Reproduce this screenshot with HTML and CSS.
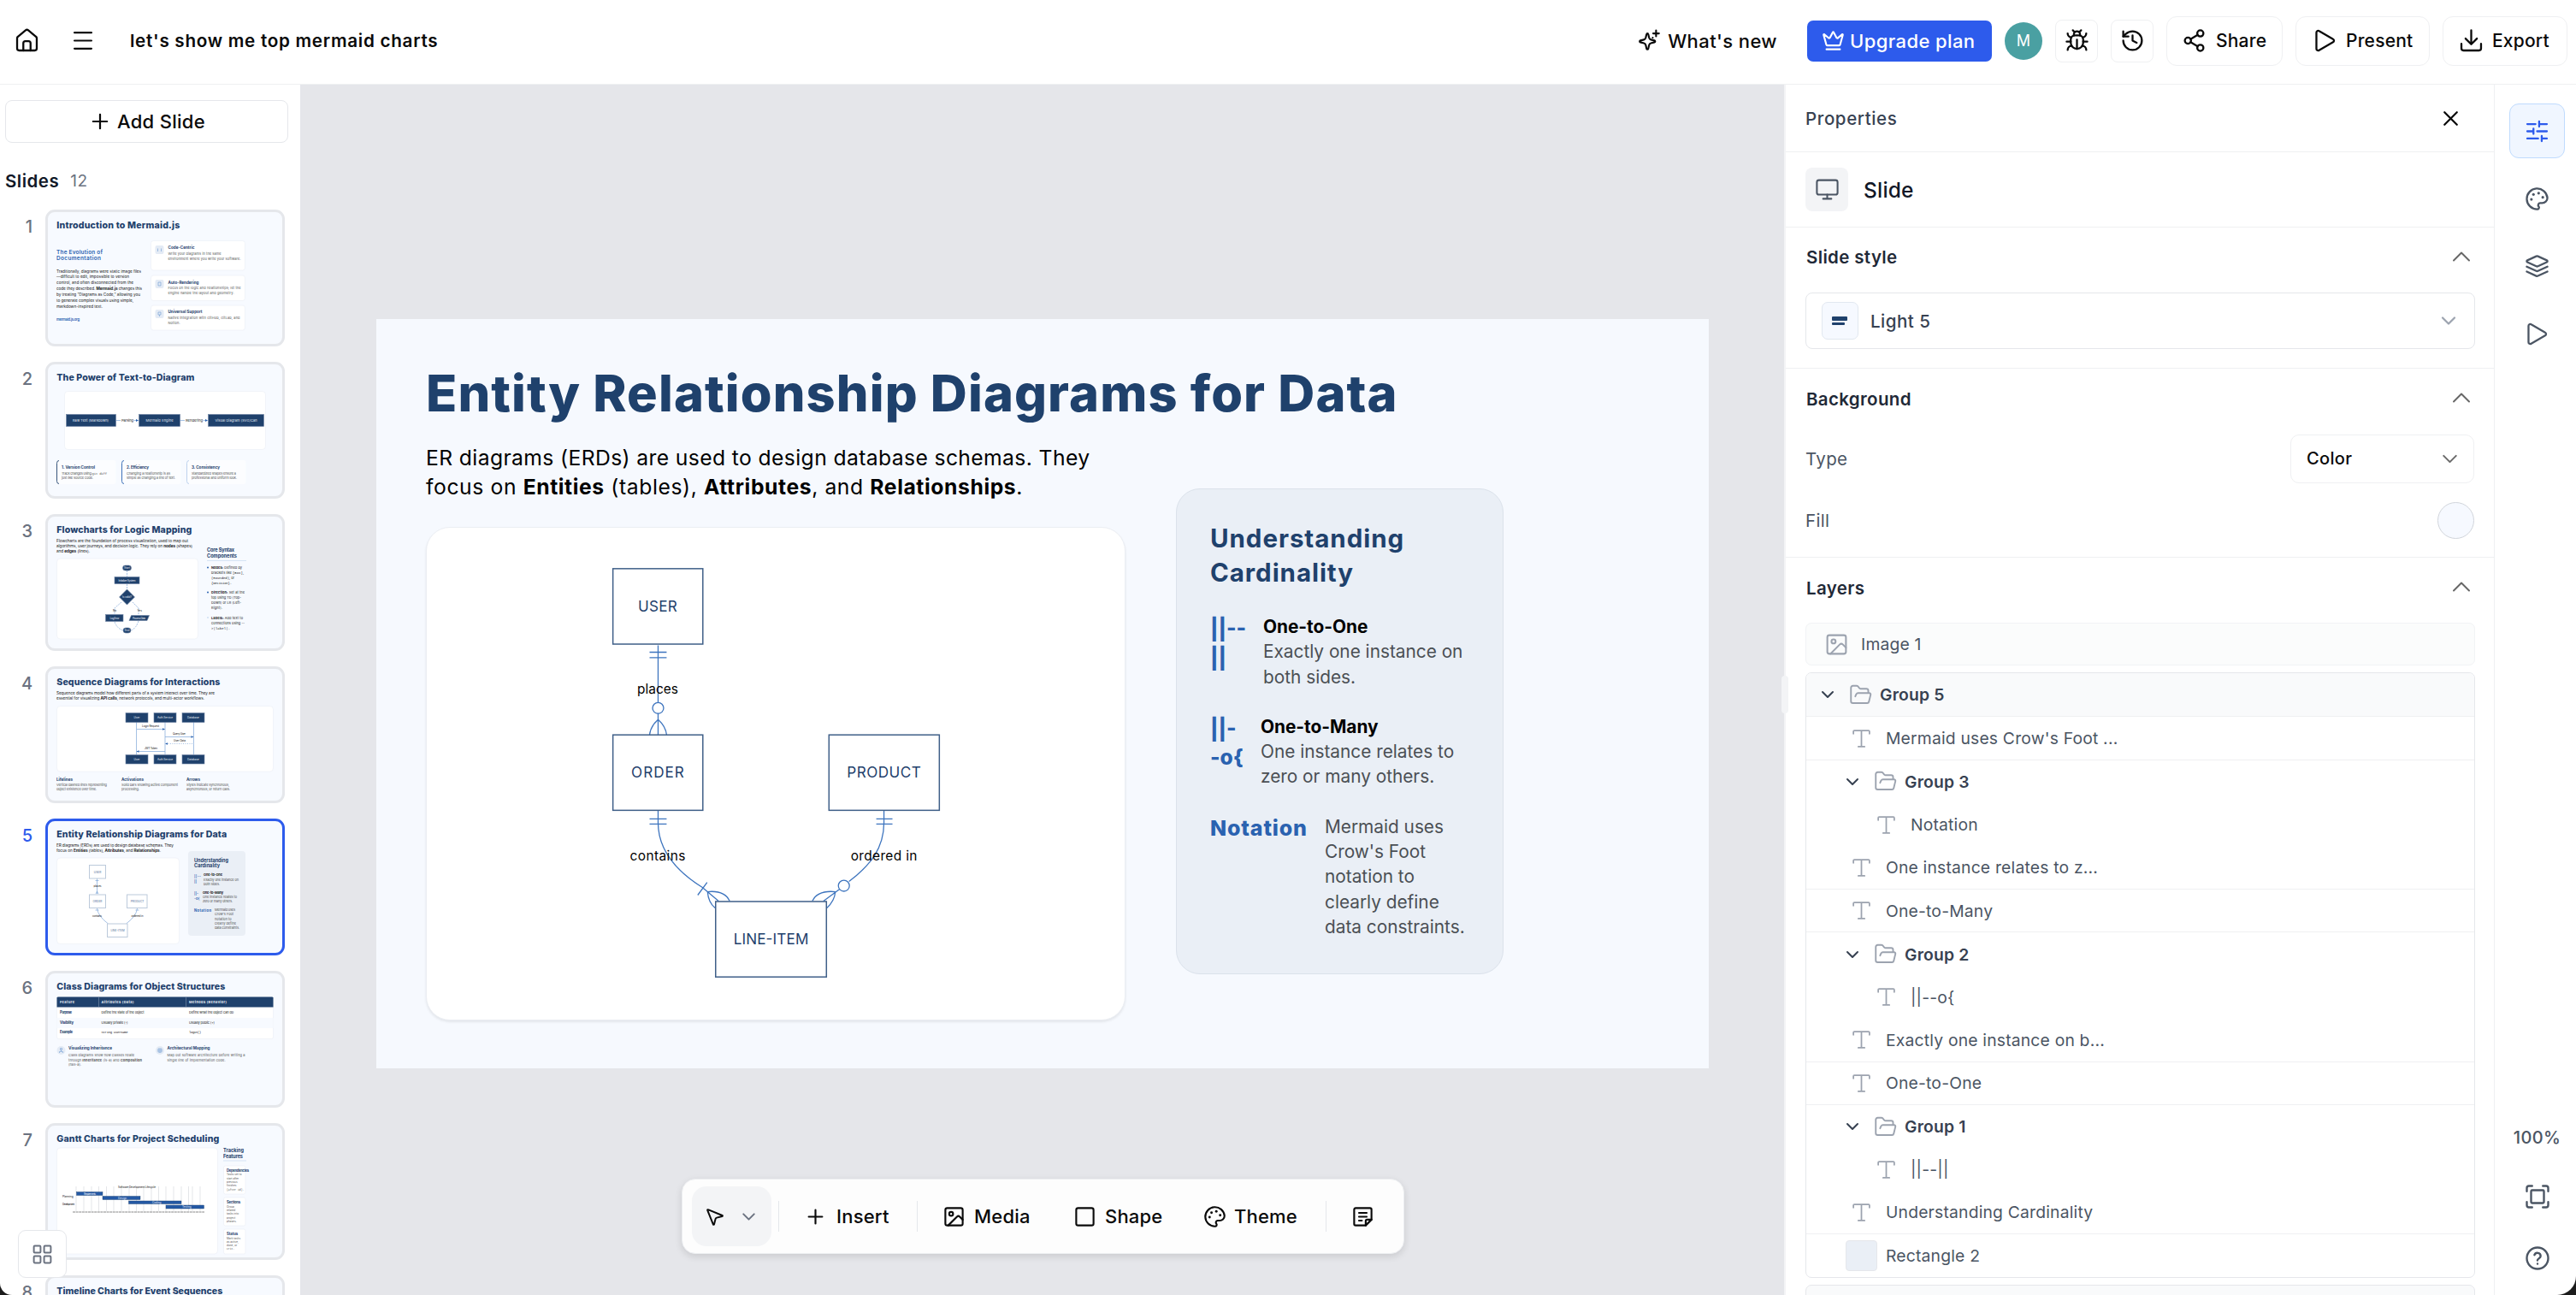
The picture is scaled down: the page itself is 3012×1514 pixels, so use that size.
FILE: index.html
```html
<!DOCTYPE html>
<html lang="en">
<head>
  <meta charset="UTF-8" />
  <meta name="viewport" content="width=device-width, initial-scale=1.0"/>
  <title>let's show me top mermaid charts</title>
  <link rel="stylesheet" href="styles.css">
</head>
<body>

  <!-- icon set -->
  <svg class="icon-defs" width="0" height="0">
    <symbol id="i-home" viewBox="0 0 24 24"><path d="M8.5 21.5v-7a2 2 0 0 1 2-2h3a2 2 0 0 1 2 2v7"/><path d="M2.5 9.7a2 2 0 0 1 .8-1.6L10.7 2a2 2 0 0 1 2.6 0l7.4 6.1a2 2 0 0 1 .8 1.6v9.8a2 2 0 0 1-2 2h-15a2 2 0 0 1-2-2z"/></symbol>
    <symbol id="i-menu" viewBox="0 0 24 24"><path d="M3.5 4h17M3.5 12h17M3.5 20h17"/></symbol>
    <symbol id="i-plus" viewBox="0 0 24 24"><path d="M5 12h14M12 5v14"/></symbol>
    <symbol id="i-x" viewBox="0 0 24 24"><path d="M18 6 6 18M6 6l12 12"/></symbol>
    <symbol id="i-down" viewBox="0 0 24 24"><path d="m6 9 6 6 6-6"/></symbol>
    <symbol id="i-up" viewBox="0 0 24 24"><path d="m6 15 6-6 6 6"/></symbol>
    <symbol id="i-sparkles" viewBox="0 0 24 24"><path d="M10 4.500c.5 0 .8.3.9.8l.9 3.900a2.500 2.500 0 0 0 1.800 1.800l3.700.9c1 .3 1 1.500 0 1.800l-3.700.9a2.500 2.500 0 0 0-1.800 1.800l-.9 3.900c-.3 1-1.500 1-1.800 0l-.9-3.900a2.500 2.500 0 0 0-1.800-1.800l-3.700-.9c-1-.3-1-1.500 0-1.800l3.700-.9a2.500 2.500 0 0 0 1.800-1.800l.9-3.900c.1-.5.4-.8.9-.8z"/><path d="M19 1.500v6M22 4.500h-6M15.500 9v.01"/></symbol>
    <symbol id="i-crown" viewBox="0 0 24 24"><path d="M11.562 3.266a.5.5 0 0 1 .876 0L15.390 8.870a1 1 0 0 0 1.516.294L21.183 5.500a.5.5 0 0 1 .798.519l-2.834 10.246a1 1 0 0 1-.956.734H5.810a1 1 0 0 1-.957-.734L2.020 6.020a.5.5 0 0 1 .798-.519l4.276 3.664a1 1 0 0 0 1.516-.294z"/><path d="M5 21h14"/></symbol>
    <symbol id="i-bug" viewBox="0 0 24 24"><path d="m8 2 1.880 1.880M14.120 3.880 16 2M9 7.130v-1a3.003 3.003 0 1 1 6 0v1"/><path d="M12 20c-3.300 0-6-2.700-6-6v-3a4 4 0 0 1 4-4h4a4 4 0 0 1 4 4v3c0 3.300-2.700 6-6 6"/><path d="M12 20v-9M6.530 9C4.600 8.800 3 7.100 3 5M6 13H2M3 21c0-2.100 1.700-3.900 3.800-4M20.970 5c0 2.100-1.600 3.800-3.500 4M22 13h-4M17.200 17c2.100.1 3.800 1.900 3.800 4"/></symbol>
    <symbol id="i-history" viewBox="0 0 24 24"><path d="M3 12a9 9 0 1 0 9-9 9.750 9.750 0 0 0-6.740 2.740L3 8"/><path d="M3 3v5h5M12 7v5l4 2"/></symbol>
    <symbol id="i-share" viewBox="0 0 24 24"><circle cx="18" cy="5" r="3"/><circle cx="6" cy="12" r="3"/><circle cx="18" cy="19" r="3"/><path d="m8.590 13.510 6.830 3.980M15.410 6.510l-6.820 3.980"/></symbol>
    <symbol id="i-play" viewBox="0 0 24 24"><path d="M3.700 4.200a1.700 1.700 0 0 1 2.600-1.500l13.500 7.800a1.700 1.700 0 0 1 0 3l-13.500 7.800a1.700 1.700 0 0 1-2.600-1.500z"/></symbol>
    <symbol id="i-download" viewBox="0 0 24 24"><path d="M12 2v13.500M6.500 10l5.500 5.500 5.500-5.500M2.500 15v4.500a2 2 0 0 0 2 2h15a2 2 0 0 0 2-2V15"/></symbol>
    <symbol id="i-sliders" viewBox="0 0 24 24"><path d="M2.500 5h8M14 5h7.500M14 2.500v5M2.500 12h5M8.500 9.500v5M12 12h9.500M2.500 19h10.500M16.500 19h5M16.500 16.500v5"/></symbol>
    <symbol id="i-palette" viewBox="0 0 24 24"><path d="M12 22a10 10 0 1 1 10-11c0 3-2.500 5-5 5h-2a2 2 0 0 0-1.400 3.400A1.650 1.650 0 0 1 12 22z"/><circle class="dot" cx="13.500" cy="6.500" r="1.300"/><circle class="dot" cx="17.500" cy="10.500" r="1.300"/><circle class="dot" cx="6.500" cy="12.500" r="1.300"/><circle class="dot" cx="8.500" cy="7.700" r="1.300"/></symbol>
    <symbol id="i-layers" viewBox="0 0 24 24"><path d="M12.830 2.180a2 2 0 0 0-1.660 0L2.600 6.080a1 1 0 0 0 0 1.830l8.580 3.910a2 2 0 0 0 1.660 0l8.580-3.900a1 1 0 0 0 0-1.830z"/><path d="m2 12.200 9.170 4.170a2 2 0 0 0 1.660 0L22 12.200M2 17l9.170 4.170a2 2 0 0 0 1.660 0L22 17"/></symbol>
    <symbol id="i-monitor" viewBox="0 0 24 24"><rect x="2" y="3" width="20" height="14" rx="2"/><path d="M8 21h8M12 17v4"/></symbol>
    <symbol id="i-image" viewBox="0 0 24 24"><rect x="3" y="3" width="18" height="18" rx="2"/><circle cx="9" cy="9" r="2"/><path d="m21 15-3.086-3.086a2 2 0 0 0-2.828 0L6 21"/></symbol>
    <symbol id="i-square" viewBox="0 0 24 24"><rect x="3" y="3" width="18" height="18" rx="2"/></symbol>
    <symbol id="i-note" viewBox="0 0 24 24"><path d="M21 15V4.500A1.500 1.500 0 0 0 19.500 3h-15A1.500 1.500 0 0 0 3 4.500v15A1.500 1.500 0 0 0 4.500 21H15z"/><path d="M21 15h-4.500a1.500 1.500 0 0 0-1.500 1.500V21M8 8h8M8 12h8M8 16h3"/></symbol>
    <symbol id="i-pointer" viewBox="0 0 24 24"><path d="M4.037 4.688a.495.495 0 0 1 .651-.651l16 6.500a.5.5 0 0 1-.063.947l-6.124 1.580a2 2 0 0 0-1.438 1.435l-1.579 6.126a.5.5 0 0 1-.947.063z"/></symbol>
    <symbol id="i-folder" viewBox="0 0 24 24"><path d="M6.500 13.500 7.600 11a2 2 0 0 1 1.800-1H21a1.500 1.500 0 0 1 1.400 1.900l-1.700 7A2 2 0 0 1 18.800 20.500H4a2 2 0 0 1-2-2v-14a2 2 0 0 1 2-2h4a2 2 0 0 1 1.600.9l.9 1.200a2 2 0 0 0 1.600.9H18a2 2 0 0 1 2 2V10"/></symbol>
    <symbol id="i-text" viewBox="0 0 24 24"><path d="M12 3v18M3 6.500V4a1 1 0 0 1 1-1h16a1 1 0 0 1 1 1v2.500M8.500 21h7"/></symbol>
    <symbol id="i-fit" viewBox="0 0 24 24"><path d="M2 7V4a2 2 0 0 1 2-2h3M17 2h3a2 2 0 0 1 2 2v3M22 17v3a2 2 0 0 1-2 2h-3M7 22H4a2 2 0 0 1-2-2v-3"/><rect x="6" y="6" width="12" height="12" rx="1"/></symbol>
    <symbol id="i-help" viewBox="0 0 24 24"><circle cx="12" cy="12" r="10"/><path d="M9.090 9a3 3 0 0 1 5.830 1c0 2-3 2.500-3 4M12 17.200v.01"/></symbol>
    <symbol id="i-grid" viewBox="0 0 24 24"><rect x="2.500" y="2.500" width="7.500" height="7.500" rx="1"/><rect x="14" y="2.500" width="7.500" height="7.500" rx="1"/><rect x="2.500" y="14" width="7.500" height="7.500" rx="1"/><rect x="14" y="14" width="7.500" height="7.500" rx="1"/></symbol>
  </svg>

  <div class="app">
    <header class="topbar">
      <svg class="icon home"><use href="#i-home"/></svg>
      <svg class="icon menu"><use href="#i-menu"/></svg>
      <h1 class="doc-title">let's show me top mermaid charts</h1>
      <div class="actions">
        <button class="whats-new"><svg class="icon"><use href="#i-sparkles"/></svg><span>What's new</span></button>
        <button class="upgrade"><svg class="icon"><use href="#i-crown"/></svg><span>Upgrade plan</span></button>
        <div class="avatar">M</div>
        <button class="icon-btn"><svg class="icon"><use href="#i-bug"/></svg></button>
        <button class="icon-btn"><svg class="icon"><use href="#i-history"/></svg></button>
        <button class="btn share"><svg class="icon"><use href="#i-share"/></svg><span>Share</span></button>
        <button class="btn present"><svg class="icon"><use href="#i-play"/></svg><span>Present</span></button>
        <button class="btn export"><svg class="icon"><use href="#i-download"/></svg><span>Export</span></button>
      </div>
    </header>

    <div class="workspace">
      <aside class="sidebar">
        <button class="add-slide"><svg class="icon"><use href="#i-plus"/></svg>Add Slide</button>
        <div class="slides-head"><b>Slides</b><span>12</span></div>
        <div class="thumbs">

          <div class="thumb-row">
            <span class="num">1</span>
            <svg class="thumb" viewBox="0 0 274 154">
              <text class="t" x="10.300" y="19" textLength="144">Introduction to Mermaid.js</text>
              <g class="sub"><text x="10" y="49" textLength="54">The Evolution of</text><text x="10" y="56" textLength="52">Documentation</text></g>
              <g class="body">
                <text x="10" y="70.500" textLength="99">Traditionally, diagrams were static image files</text>
                <text x="10" y="76.500" textLength="85">—difficult to edit, impossible to version</text>
                <text x="10" y="83.500" textLength="90">control, and often disconnected from the</text>
                <text x="10" y="90.500" textLength="100">code they described. <tspan class="b">Mermaid.js</tspan> changes this</text>
                <text x="10" y="97.500" textLength="98">by treating "Diagrams as Code," allowing you</text>
                <text x="10" y="104.500" textLength="90">to generate complex visuals using simple,</text>
                <text x="10" y="111.500" textLength="54">markdown-inspired text.</text>
              </g>
              <text class="link" x="10" y="126.500" textLength="27">mermaid.js.org</text>
              <rect class="card" x="120.500" y="33.500" width="110" height="34.500" rx="3"/>
              <rect class="card" x="120.500" y="74" width="110" height="29.500" rx="3"/>
              <rect class="card" x="120.500" y="109" width="110" height="29" rx="3"/>
              <rect class="chip" x="125.500" y="39" width="10" height="10" rx="2"/>
              <rect class="chip" x="125.500" y="79" width="10" height="10" rx="2"/>
              <rect class="chip" x="125.500" y="114" width="10" height="10" rx="2"/>
              <path class="ln" d="M128.500 42.500v3.500M132.500 42.500v3.500M129 82h3v4h-3zM129 117h3v3h-3zM130.500 120v2"/>
              <g class="head"><text x="140.500" y="43.200" textLength="31">Code-Centric</text><text x="140.500" y="84" textLength="36">Auto-Rendering</text><text x="140.500" y="118.200" textLength="40">Universal Support</text></g>
              <g class="small">
                <text x="140.500" y="50" textLength="62">Write your diagrams in the same</text><text x="140.500" y="56" textLength="85">environment where you write your software.</text>
                <text x="140.500" y="90" textLength="85">Focus on the logic and relationships; let the</text><text x="140.500" y="96" textLength="77">engine handle the layout and geometry.</text>
                <text x="140.500" y="125" textLength="84">Native integration with GitHub, GitLab, and</text><text x="140.500" y="131" textLength="14">Notion.</text>
              </g>
            </svg>
          </div>

          <div class="thumb-row">
            <span class="num">2</span>
            <svg class="thumb" viewBox="0 0 274 154">
              <text class="t" x="10.300" y="19" textLength="161">The Power of Text-to-Diagram</text>
              <rect class="card" x="19.500" y="31.500" width="235" height="68" rx="4"/>
              <path class="ln" d="M80 65.500h5M100.500 65.500h5M155 65.500h5M181.500 65.500h5"/>
              <path class="tip" d="M103 64l3 1.500-3 1.500zM184 64l3 1.500-3 1.500z"/>
              <rect class="node" x="21.500" y="58.500" width="58" height="14"/>
              <rect class="node" x="106.500" y="58.500" width="48" height="14"/>
              <rect class="node" x="187.500" y="58.500" width="65" height="14"/>
              <g class="inv"><text x="29" y="67" textLength="42">Raw Text (Markdown)</text><text x="114.500" y="67" textLength="32">Mermaid Engine</text><text x="195.500" y="67" textLength="49">Visual Diagram (SVG/Can</text></g>
              <g class="lbl"><text x="86" y="67" textLength="14">Parsing</text><text x="161" y="67" textLength="20">Rendering</text></g>
              <rect class="soft" x="10.500" y="112" width="69" height="28" rx="3"/><rect class="soft" x="86.500" y="112" width="69" height="28" rx="3"/><rect class="soft" x="162.500" y="112" width="69" height="28" rx="3"/>
              <path class="acc a1" d="M13 112.500q-2.500 0-2.500 3v21q0 3 2.500 3"/><path class="acc a2" d="M89 112.500q-2.500 0-2.500 3v21q0 3 2.500 3"/><path class="acc a3" d="M165 112.500q-2.500 0-2.500 3v21q0 3 2.500 3"/>
              <g class="head"><text x="16" y="121.800" textLength="39">1. Version Control</text><text x="92" y="121.800" textLength="26">2. Efficiency</text><text x="168" y="121.800" textLength="33">3. Consistency</text></g>
              <g class="small">
                <text x="16" y="129" textLength="53">Track changes using <tspan class="mono">git diff</tspan></text><text x="16" y="133.800" textLength="37">just like source code.</text>
                <text x="92" y="129" textLength="51">Changing a relationship is as</text><text x="92" y="133.800" textLength="57">simple as changing a line of text.</text>
                <text x="168" y="129" textLength="52">Standardized shapes ensure a</text><text x="168" y="133.800" textLength="53">professional and uniform look.</text>
              </g>
            </svg>
          </div>

          <div class="thumb-row">
            <span class="num">3</span>
            <svg class="thumb" viewBox="0 0 274 154">
              <text class="t" x="10.300" y="19" textLength="158">Flowcharts for Logic Mapping</text>
              <g class="body"><text x="10" y="30" textLength="154">Flowcharts are the foundation of process visualization, used to map out</text><text x="10" y="36" textLength="159">algorithms, user journeys, and decision logic. They rely on <tspan class="b">nodes</tspan> (shapes)</text><text x="10" y="42" textLength="39">and <tspan class="b">edges</tspan> (lines).</text></g>
              <rect class="card" x="10.500" y="49" width="165" height="94" rx="4"/>
              <path class="ln dash" d="M92.500 63v7M92.500 79v6M86 100l-8 7v7M99 100l7 7v8M78 123q3 8 10 10M106 122q-3 9-9 11"/>
              <rect class="node" x="87.500" y="57" width="10" height="6" rx="3"/>
              <rect class="node" x="78" y="70.500" width="29" height="8"/>
              <path class="node" d="M92.500 85l9 9-9 9-9-9z"/>
              <rect class="node" x="67.500" y="114.500" width="20.500" height="8"/>
              <path class="node" d="M97.500 115.500h21l-2.500 6h-21z"/>
              <rect class="node" x="88" y="130" width="9" height="6" rx="3"/>
              <g class="inv tiny"><text x="92.500" y="61" text-anchor="middle">Start</text><text x="92.500" y="75.500" text-anchor="middle" textLength="20">Initialize System</text><text x="92.500" y="95" text-anchor="middle" textLength="11">Is valid?</text><text x="78" y="119.500" text-anchor="middle" textLength="11">Log Error</text><text x="106.500" y="119.500" text-anchor="middle" textLength="15">Process Data</text><text x="92.500" y="134" text-anchor="middle">End</text></g>
              <g class="lbl tiny"><text x="76" y="110.500">No</text><text x="104.500" y="110.500">Yes</text></g>
              <g class="head side"><text x="186" y="41" textLength="32">Core Syntax</text><text x="186" y="48" textLength="35">Components</text></g>
              <path class="rule" d="M186 51.500h46"/>
              <circle class="tip" cx="187" cy="59.500" r="1"/><circle class="tip" cx="187" cy="88.500" r="1"/><circle class="tip a3" cx="187" cy="118" r=".8"/>
              <g class="small dark"><text x="191" y="61" textLength="36"><tspan class="b">Nodes:</tspan> Defined by</text><text x="191" y="67" textLength="38">brackets like <tspan class="mono">[Box]</tspan>,</text><text x="191" y="73" textLength="27"><tspan class="mono">(Rounded)</tspan>, or</text><text x="191" y="79" textLength="24" class="mono">{Decision}.</text>
              <text x="191" y="90" textLength="39"><tspan class="b">Direction:</tspan> Set at the</text><text x="191" y="96" textLength="35">top using TD (Top-</text><text x="191" y="102" textLength="35">Down) or LR (Left-</text><text x="191" y="108" textLength="13">Right).</text>
              <text x="191" y="120" textLength="37"><tspan class="b">Labels:</tspan> Add text to</text><text x="191" y="126" textLength="39">connections using --</text><text x="191" y="132" textLength="22" class="mono">&gt;|label|.</text></g>
            </svg>
          </div>

          <div class="thumb-row">
            <span class="num">4</span>
            <svg class="thumb" viewBox="0 0 274 154">
              <text class="t" x="10.300" y="19" textLength="191">Sequence Diagrams for Interactions</text>
              <g class="body"><text x="10" y="30" textLength="185">Sequence diagrams model how different parts of a system interact over time. They are</text><text x="10" y="36" textLength="173">essential for visualizing <tspan class="b">API calls</tspan>, network protocols, and multi-actor workflows.</text></g>
              <rect class="card" x="10.500" y="43.500" width="253" height="76.500" rx="4"/>
              <path class="ln" d="M103.500 62v38M137 62v38M170.500 62v38M104 70.500h33M137 79.500h33M104 96.500h33"/>
              <path class="ln" stroke-dasharray="1 1.500" d="M138 87.500h32"/>
              <path class="tip" d="M134 69.300l3 1.200-3 1.200zM167.500 78.300l3 1.200-3 1.200zM140 86.300l-3 1.200 3 1.200zM106.500 95.300l-3 1.200 3 1.200z"/>
              <g class="node"><rect x="91" y="51.500" width="26" height="11"/><rect x="124" y="51.500" width="26" height="11"/><rect x="157" y="51.500" width="26" height="11"/><rect x="91" y="100.500" width="26" height="10.500"/><rect x="124" y="100.500" width="26" height="10.500"/><rect x="157" y="100.500" width="26" height="10.500"/></g>
              <g class="inv tiny"><text x="104" y="58.200" text-anchor="middle">User</text><text x="137" y="58.200" text-anchor="middle" textLength="18">Auth Service</text><text x="170" y="58.200" text-anchor="middle">Database</text><text x="104" y="107" text-anchor="middle">User</text><text x="137" y="107" text-anchor="middle" textLength="18">Auth Service</text><text x="170" y="107" text-anchor="middle">Database</text></g>
              <g class="lbl tiny"><text x="110" y="68" textLength="20">Login Request</text><text x="146" y="77" textLength="15">Query User</text><text x="147" y="85" textLength="14">User Data</text><text x="113" y="94" textLength="15">JWT Token</text></g>
              <g class="head"><text x="10" y="130.800" textLength="19">Lifelines</text><text x="86" y="130.800" textLength="26">Activations</text><text x="162" y="130.800" textLength="16">Arrows</text></g>
              <g class="small"><text x="10" y="137" textLength="59">Vertical dashed lines representing</text><text x="10" y="142" textLength="47">object existence over time.</text><text x="86" y="137" textLength="66">Solid bars showing active component</text><text x="86" y="142" textLength="21">processing.</text><text x="162" y="137" textLength="50">Styles indicate synchronous,</text><text x="162" y="142" textLength="51">asynchronous, or return calls.</text></g>
            </svg>
          </div>

          <div class="thumb-row active">
            <span class="num">5</span>
            <svg class="thumb" viewBox="0 0 274 154">
              <text class="t" x="10.300" y="19" textLength="199">Entity Relationship Diagrams for Data</text>
              <g class="body"><text x="10" y="30" textLength="137">ER diagrams (ERDs) are used to design database schemas. They</text><text x="10" y="36" textLength="122">focus on <tspan class="b">Entities</tspan> (tables), <tspan class="b">Attributes</tspan>, and <tspan class="b">Relationships</tspan>.</text></g>
              <rect class="card" x="10.500" y="43" width="143" height="100.500" rx="4"/>
              <rect class="side-card" x="164" y="35" width="67" height="99" rx="4"/>
              <path class="ln" d="M57.500 67v18M55.500 69.500h4M55.500 104h4M102.500 104h4M57.500 102q1 9 13 18M104.500 102q-1 9-13 18M56 85l1.500-3 1.500 3"/>
              <g class="ent"><rect x="48.500" y="51.500" width="19" height="15.500"/><rect x="48.500" y="86" width="19" height="15.500"/><rect x="92.500" y="86" width="23.500" height="15.500"/><rect x="69.500" y="120" width="23.500" height="15.500"/></g>
              <g class="enttxt"><text x="58" y="60.500">USER</text><text x="58" y="94.800">ORDER</text><text x="104.500" y="94.800">PRODUCT</text><text x="81.500" y="129.200">LINE-ITEM</text></g>
              <g class="lbl tiny"><text x="53.500" y="77" textLength="9">places</text><text x="52" y="111.500" textLength="11">contains</text><text x="97.500" y="111.500" textLength="14">ordered in</text></g>
              <g class="head side"><text x="171" y="47.500" textLength="40">Understanding</text><text x="171" y="54.300" textLength="30">Cardinality</text></g>
              <g class="link"><text x="171" y="65.500" textLength="8">||--</text><text x="171" y="71.500">||</text><text x="171" y="86">||-</text><text x="171" y="92">-o{</text><text x="171" y="106" class="b" textLength="20">Notation</text></g>
              <g class="small dark b"><text x="182" y="64" textLength="22">One-to-One</text><text x="181" y="85" textLength="24">One-to-Many</text></g>
              <g class="small"><text x="182" y="70" textLength="41">Exactly one instance on</text><text x="182" y="75" textLength="19">both sides.</text><text x="181" y="90" textLength="40">One instance relates to</text><text x="181" y="95" textLength="35">zero or many others.</text><text x="195" y="105" textLength="24">Mermaid uses</text><text x="195" y="110">Crow's Foot</text><text x="195" y="116">notation to</text><text x="195" y="121">clearly define</text><text x="195" y="126" textLength="29">data constraints.</text></g>
            </svg>
          </div>

          <div class="thumb-row">
            <span class="num">6</span>
            <svg class="thumb" viewBox="0 0 274 154">
              <text class="t" x="10.300" y="19" textLength="197">Class Diagrams for Object Structures</text>
              <rect class="card" x="10.500" y="27.500" width="253" height="49" rx="2"/>
              <path class="fill-navy" d="M10.500 39.500v-11l1-1h251l1 1v11z"/>
              <rect class="band" x="10.500" y="52" width="253" height="12"/>
              <path class="cols" d="M59.500 27.500v12M161.500 27.500v12"/>
              <g class="inv b"><text x="14" y="34.800" textLength="17">Feature</text><text x="62.500" y="34.800" textLength="38">Attributes (Data)</text><text x="165" y="34.800" textLength="44">Methods (Behavior)</text></g>
              <g class="head sm"><text x="14" y="47" textLength="14">Purpose</text><text x="14" y="58.500" textLength="16">Visibility</text><text x="14" y="70" textLength="15">Example</text></g>
              <g class="small dark"><text x="62.500" y="47" textLength="50">Define the state of the object</text><text x="165" y="47" textLength="52">Define what the object can do</text><text x="62.500" y="58.500" textLength="31">Usually private (-)</text><text x="165" y="58.500" textLength="30">Usually public (+)</text><text x="62.500" y="70" class="mono" textLength="31">String username</text><text x="165" y="70" class="mono" textLength="14">login()</text></g>
              <circle class="chip" cx="15.500" cy="90" r="5"/><circle class="chip" cx="131" cy="90" r="5"/>
              <path class="ln" d="M14.500 87.500h2v2h-2zM15.500 89.500v1.500M13.500 93v-1.500h4V93M129 88h4v4h-4zM131 88v5M128.500 90h5"/>
              <g class="head"><text x="24" y="89.300" textLength="51">Visualizing Inheritance</text><text x="139.500" y="89.300" textLength="50">Architectural Mapping</text></g>
              <g class="small"><text x="24" y="96.800" textLength="77">Class diagrams show how classes relate</text><text x="24" y="102.500" textLength="86">through <tspan class="b">Inheritance</tspan> (is-a) and <tspan class="b">Composition</tspan></text><text x="24" y="108.300" textLength="15">(has-a).</text><text x="139.500" y="96.800" textLength="91">Map out software architecture before writing a</text><text x="139.500" y="102.500" textLength="68">single line of implementation code.</text></g>
            </svg>
          </div>

          <div class="thumb-row">
            <span class="num">7</span>
            <svg class="thumb" viewBox="0 0 274 154">
              <text class="t" x="10.300" y="19" textLength="190">Gantt Charts for Project Scheduling</text>
              <rect class="card" x="10.500" y="26" width="188" height="124" rx="4"/>
              <path class="gridl" d="M33 71v29M42 71v29M51 71v29M59.500 71v29M68.500 71v29M77 71v29M86 71v29M95 71v29M103.500 71v29M112 71v29M121 71v29M129.500 71v29M138 71v29M147 71v29M156 71v29M164.500 71v29M169 71v29M178 71v29"/>
              <g class="bar"><rect x="33.500" y="77.500" width="30.500" height="4"/><rect x="64" y="82.500" width="44" height="4"/><rect x="94.500" y="88" width="61.500" height="3.500"/><rect x="138" y="93" width="44.500" height="4"/></g>
              <g class="inv tiny"><text x="42" y="80.700" textLength="14">Requirements</text><text x="82" y="85.700">Design</text><text x="122" y="90.900">Coding</text><text x="157" y="96">Testing</text></g>
              <g class="lbl tiny"><text x="82" y="72.500" textLength="44">Software Development Lifecycle</text><text x="17" y="83.800">Planning</text><text x="17" y="92.800" textLength="14">Development</text></g>
              <path class="axis" d="M29 101h154"/>
              <g class="head side"><text x="205" y="31" textLength="24">Tracking</text><text x="205" y="38" textLength="23">Features</text></g>
              <path class="rule" d="M205 41h27"/>
              <rect class="card" x="205.500" y="47" width="25.500" height="33" rx="2"/><rect class="card" x="205.500" y="84" width="25.500" height="33" rx="2"/><rect class="card" x="205.500" y="121" width="25.500" height="29" rx="2"/>
              <g class="head sm"><text x="209" y="53.800" textLength="26">Dependencies</text><text x="209" y="91" textLength="16">Sections</text><text x="209" y="128">Status</text></g>
              <g class="small tiny"><text x="209" y="58">Tasks set to</text><text x="209" y="62.500">start after</text><text x="209" y="66.500">previous</text><text x="209" y="71">finishes</text><text x="209" y="75.500" class="mono">(after id).</text><text x="209" y="95.500">Group</text><text x="209" y="100">related</text><text x="209" y="104">tasks into</text><text x="209" y="108.500">project</text><text x="209" y="113">phases.</text><text x="209" y="133">Mark tasks</text><text x="209" y="137">as active,</text><text x="209" y="141">done, or</text><text x="209" y="145" class="mono">crit.</text></g>
            </svg>
          </div>

          <div class="thumb-row">
            <span class="num">8</span>
            <svg class="thumb" viewBox="0 0 274 154">
              <text class="t" x="10.300" y="19" textLength="194">Timeline Charts for Event Sequences</text>
            </svg>
          </div>
        </div>
        <button class="grid-toggle"><svg class="icon"><use href="#i-grid"/></svg></button>
      </aside>

      <main class="canvas">
        <section class="slide">
          <div class="slide-main">
            <h2 class="slide-title">Entity Relationship Diagrams for Data</h2>
            <p class="lead">ER diagrams (ERDs) are used to design database schemas. They<br><span class="l2">focus on <b>Entities</b> (tables), <b>Attributes</b>, and <b>Relationships</b>.</span></p>
            <svg class="er" viewBox="498 617 818 577">
              <g class="edge">
                <path d="M769 755V822M769 835V860M769 842q-9 8-10 18M769 842q9 8 10 18M759 763h20M759 769.500h20"/>
                <circle cx="769" cy="828.500" r="6.500"/>
                <path d="M769 949v14c0 32 20 56 52 76l19 16M759 958.500h20M759 964.500h20M826.500 1033l-11 15M827 1044q1 13 9 19M827 1044q20-2 26 11"/>
                <path d="M1034 949v14c0 30-16 50-41 69M982 1041l-19 14M1025 958.500h19M1025 964.500h19M977 1044q-1 11-10 19M977 1044q-21-2-27 11"/>
                <circle cx="987" cy="1037" r="6.500"/>
              </g>
              <g class="entity">
                <rect x="716" y="665" width="105.500" height="88.500"/>
                <rect x="716" y="860" width="105.500" height="88.500"/>
                <rect x="969.500" y="860" width="129.500" height="88.500"/>
                <rect x="836.500" y="1055.500" width="130" height="88.500"/>
              </g>
              <g class="entity-name">
                <text x="768.500" y="715" textLength="46">USER</text>
                <text x="768.500" y="910.500" textLength="62">ORDER</text>
                <text x="1034" y="910.500" textLength="87">PRODUCT</text>
                <text x="901.500" y="1106" textLength="88">LINE-ITEM</text>
              </g>
              <g class="edge-name">
                <text x="768.500" y="812" textLength="48">places</text>
                <text x="768.500" y="1007" textLength="65">contains</text>
                <text x="1034" y="1007" textLength="78">ordered in</text>
              </g>
            </svg>
          </div>

          <div class="cardinality">
            <h3>Understanding<br>Cardinality</h3>
            <div class="fact">
              <div class="sym w1">||--<br>||</div>
              <div><b>One-to-One</b><p>Exactly one instance on<br>both sides.</p></div>
            </div>
            <div class="fact">
              <div class="sym w2">||-<br>-o{</div>
              <div><b>One-to-Many</b><p>One instance relates to<br>zero or many others.</p></div>
            </div>
            <div class="fact">
              <div class="sym w3">Notation</div>
              <div><p>Mermaid uses<br>Crow's Foot<br>notation to<br>clearly define<br>data constraints.</p></div>
            </div>
          </div>
        </section>

        <div class="toolbar">
          <div class="cursor-tool"><svg class="icon"><use href="#i-pointer"/></svg><svg class="icon chev"><use href="#i-down"/></svg></div>
          <i class="sep"></i>
          <button class="tool insert"><svg class="icon"><use href="#i-plus"/></svg>Insert</button>
          <i class="sep"></i>
          <button class="tool media"><svg class="icon"><use href="#i-image"/></svg>Media</button>
          <button class="tool shape"><svg class="icon"><use href="#i-square"/></svg>Shape</button>
          <button class="tool theme"><svg class="icon"><use href="#i-palette"/></svg>Theme</button>
          <i class="sep"></i>
          <button class="tool note"><svg class="icon"><use href="#i-note"/></svg></button>
        </div>
      </main>

      <aside class="props">
        <i class="resize-handle"></i>
        <div class="props-head"><span>Properties</span><svg class="icon"><use href="#i-x"/></svg></div>
        <div class="props-type"><div class="type-icon"><svg class="icon"><use href="#i-monitor"/></svg></div><span>Slide</span></div>

        <section class="style-sec">
          <div class="sec-head"><span>Slide style</span><svg class="icon"><use href="#i-up"/></svg></div>
          <div class="style-select"><div class="swatch"><i></i><i></i></div><span>Light 5</span><svg class="icon"><use href="#i-down"/></svg></div>
        </section>

        <section class="bg-sec">
          <div class="sec-head"><span>Background</span><svg class="icon"><use href="#i-up"/></svg></div>
          <div class="field type"><span>Type</span><div class="select">Color<svg class="icon"><use href="#i-down"/></svg></div></div>
          <div class="field fill"><span>Fill</span><i class="color-dot"></i></div>
        </section>

        <section class="layers-sec">
          <div class="sec-head"><span>Layers</span><svg class="icon"><use href="#i-up"/></svg></div>
          <div class="layer-box image"><svg class="icon"><use href="#i-image"/></svg><span>Image 1</span></div>
          <div class="layer-group" id="layers"></div>
          <div class="layer-box next"></div>
        </section>
      </aside>

      <nav class="rail">
        <button class="rail-btn on"><svg class="icon"><use href="#i-sliders"/></svg></button>
        <button class="rail-btn"><svg class="icon"><use href="#i-palette"/></svg></button>
        <button class="rail-btn"><svg class="icon"><use href="#i-layers"/></svg></button>
        <button class="rail-btn"><svg class="icon"><use href="#i-play"/></svg></button>
        <div class="rail-bottom">
          <span>100%</span>
          <svg class="icon"><use href="#i-fit"/></svg>
          <svg class="icon"><use href="#i-help"/></svg>
        </div>
      </nav>
    </div>
  </div>

  <script>
    // depth, kind, name, draws a line under the row
    const layers = [
      [0, "group", "Group 5", true],
      [1, "text", "Mermaid uses Crow's Foot ...", true],
      [1, "group", "Group 3", false],
      [2, "text", "Notation", false],
      [1, "text", "One instance relates to z...", true],
      [1, "text", "One-to-Many", true],
      [1, "group", "Group 2", false],
      [2, "text", "||--o{", false],
      [1, "text", "Exactly one instance on b...", true],
      [1, "text", "One-to-One", true],
      [1, "group", "Group 1", false],
      [2, "text", "||--||", false],
      [1, "text", "Understanding Cardinality", true],
      [1, "rectangle", "Rectangle 2", false]
    ];

    const icons = {
      group: '<svg class="icon caret"><use href="#i-down"/></svg><svg class="icon folder"><use href="#i-folder"/></svg>',
      text: '<svg class="icon tee"><use href="#i-text"/></svg>',
      rectangle: '<i class="shape-chip"></i>'
    };

    const list = document.getElementById("layers");
    layers.forEach(([depth, kind, name, line]) => {
      const row = document.createElement("div");
      row.className = "layer " + kind + " d" + depth + (line ? " line" : "");
      row.innerHTML = icons[kind];
      const label = document.createElement("span");
      label.innerText = name;
      row.appendChild(label);
      list.appendChild(row);
    });
  </script>

</body>
</html>
```
FILE: styles.css
```css
* {
  box-sizing: border-box;
}
body {
  margin: 0;
  background: #1c1c1c;
  font-family: Inter, 'Liberation Sans', sans-serif;
  color: #0a0a0a;
}
h1, h2, h3, p {
  margin: 0;
}
button {
  font-family: inherit;
  color: inherit;
  background: none;
  border: none;
  padding: 0;
}
.icon-defs {
  display: block;
}
.icon {
  display: block;
  flex: none;
  width: 29px;
  height: 29px;
  fill: none;
  stroke: currentColor;
  stroke-width: 1.9;
  stroke-linecap: round;
  stroke-linejoin: round;
}
.icon .dot, .dot {
  fill: currentColor;
  stroke: none;
}

.app {
  width: 3012px;
  height: 1514px;
  display: flex;
  flex-direction: column;
  background: #fff;
  border-radius: 0 0 22px 14px;
  overflow: hidden;
}

/* top bar */
.topbar {
  height: 99px;
  flex: none;
  display: flex;
  align-items: center;
  border-bottom: 1px solid #eff0f2;
  padding: 0 10px 3px 17px;
}
.icon.menu {
  width: 28px;
  margin-left: 37px;
}
.doc-title {
  font-size: 20.7px;
  font-weight: 600;
  letter-spacing: .7px;
  margin-left: 41px;
}
.actions {
  margin-left: auto;
  display: flex;
  align-items: center;
  gap: 15px;
}
.whats-new {
  display: flex;
  align-items: center;
  gap: 8px;
  margin-right: 20px;
  font-size: 22px;
  font-weight: 500;
  letter-spacing: .4px;
}
.whats-new .icon {
  width: 27px;
  height: 27px;
}
.upgrade {
  width: 216px;
  height: 48px;
  display: flex;
  align-items: center;
  padding-left: 17px;
  gap: 6px;
  border-radius: 7px;
  background: #2d5bec;
  color: #fff;
  font-size: 22px;
  font-weight: 500;
  letter-spacing: .4px;
}
.upgrade .icon {
  width: 27px;
  height: 27px;
}
.avatar {
  width: 44px;
  height: 44px;
  border-radius: 50%;
  background: #4aa0a2;
  color: #fff;
  font-size: 18px;
  line-height: 43px;
  text-align: center;
}
.icon-btn {
  width: 50px;
  height: 50px;
  display: flex;
  align-items: center;
  justify-content: center;
  border: 1px solid #eff0f2;
  border-radius: 8px;
}
.btn {
  height: 58px;
  display: flex;
  align-items: center;
  border: 1px solid #eff0f2;
  border-radius: 12px;
  font-size: 21px;
  font-weight: 500;
  letter-spacing: .2px;
  padding-left: 17px;
  gap: 11px;
}
.share { width: 136px; }
.present { width: 157px; padding-left: 19px; gap: 10px; }
.export { width: 146px; padding-left: 18px; gap: 10px; }

.workspace {
  flex: 1;
  min-height: 0;
  display: flex;
}

/* slide list */
.sidebar {
  position: relative;
  width: 351px;
  flex: none;
  padding: 18px 0 0 6px;
  overflow: hidden;
}
.add-slide {
  width: 331px;
  height: 50px;
  display: flex;
  align-items: center;
  justify-content: center;
  gap: 6px;
  border: 1px solid #e5e7eb;
  border-radius: 8px;
  font-size: 22px;
  font-weight: 500;
  letter-spacing: .3px;
}
.add-slide .icon {
  width: 28px;
  height: 28px;
}
.slides-head {
  height: 78px;
  display: flex;
  align-items: center;
  gap: 13px;
  padding-top: 11px;
  font-size: 20.5px;
  letter-spacing: .5px;
}
.slides-head b {
  font-weight: 600;
  color: #111827;
}
.slides-head span {
  font-size: 19px;
  color: #6b7280;
}
.thumbs {
  display: flex;
  flex-direction: column;
  gap: 18px;
}
.thumb-row {
  display: flex;
  gap: 15px;
}
.num {
  width: 32px;
  padding-top: 8px;
  text-align: right;
  font-size: 20px;
  line-height: 24px;
  font-weight: 500;
  color: #6b7280;
}
.thumb {
  width: 280px;
  height: 160px;
  border: 3px solid #e5e7eb;
  border-radius: 11px;
  background: #f7faff;
}
.active .thumb {
  border-color: #2d5bec;
}
.active .num {
  color: #2d5bec;
}
.thumb .t {
  font-size: 10.6px;
  font-weight: 800;
  fill: #1f416c;
}
.thumb .sub, .thumb .link {
  font-size: 6.4px;
  font-weight: 600;
  fill: #2a62b0;
}
.thumb .link { font-size: 4.2px; }
.thumb .body { font-size: 4.7px; fill: #222; }
.thumb .head { font-size: 4.6px; font-weight: 700; fill: #1f416c; }
.thumb .head.side { font-size: 5.6px; }
.thumb .head.sm { font-size: 4.2px; }
.thumb .small { font-size: 3.9px; fill: #555; }
.thumb .small.dark { fill: #222; }
.thumb .inv { font-size: 3.9px; fill: #e8eef7; }
.thumb .lbl { font-size: 4.1px; fill: #111; }
.thumb .tiny { font-size: 3.1px; }
.thumb .b { font-weight: 700; }
.thumb .mono { font-family: 'Liberation Mono', monospace; }
.thumb .card { fill: #fff; stroke: #e6ebf2; stroke-width: .5; }
.thumb .soft { fill: #fcfdff; }
.thumb .side-card { fill: #eaeff6; }
.thumb .chip { fill: #e4ebf5; }
.thumb .node { fill: #1f416c; stroke: #6d83a3; stroke-width: .6; }
.thumb .inv text { stroke: none; }
.thumb .fill-navy { fill: #1f416c; }
.thumb .band { fill: #f7faff; }
.thumb .cols { stroke: #7f93ae; stroke-width: .6; }
.thumb .ln { fill: none; stroke: #7ea6d8; stroke-width: .7; }
.thumb .dash { stroke-dasharray: 2 1; }
.thumb .tip { fill: #2a62b0; }
.thumb .tip.a3 { fill: #b5cdeb; }
.thumb .acc { fill: none; stroke: #1f416c; stroke-width: .9; }
.thumb .acc.a2 { stroke: #2a62b0; }
.thumb .acc.a3 { stroke: #b5cdeb; }
.thumb .rule { stroke: #d5e3f4; stroke-width: 1; }
.thumb .ent { fill: #fff; stroke: #bccadb; stroke-width: 1; }
.thumb .enttxt { font-size: 3.2px; fill: #4a6a94; text-anchor: middle; }
.thumb .gridl { stroke: #d9dbe0; stroke-width: .7; }
.thumb .bar { fill: #2459a5; stroke: #1f416c; stroke-width: .4; }
.thumb .axis { stroke: #555; stroke-width: .7; stroke-dasharray: 3 .6; }

.grid-toggle {
  position: absolute;
  left: 21px;
  bottom: 20px;
  width: 57px;
  height: 56px;
  display: flex;
  align-items: center;
  justify-content: center;
  background: #fff;
  border: 1px solid #e5e7eb;
  border-radius: 9px;
  color: #6b7280;
}
.grid-toggle .icon {
  width: 25px;
  height: 25px;
}

/* canvas */
.canvas {
  position: relative;
  width: 1735px;
  flex: none;
  background: #e5e6ea;
  padding: 274px 0 0 89px;
}
.slide {
  width: 1558px;
  height: 876px;
  display: flex;
  background: #f6f9fe;
  padding: 0 0 0 58px;
}
.slide-main {
  width: 818px;
  flex: none;
}
.slide-title {
  margin-top: 48px;
  font-size: 59.5px;
  line-height: 76px;
  font-weight: 800;
  letter-spacing: 1.1px;
  color: #1f416c;
  white-space: nowrap;
}
.lead {
  margin-top: 21px;
  font-size: 24.7px;
  line-height: 34px;
  letter-spacing: .38px;
  color: #000;
  white-space: nowrap;
}
.lead .l2 {
  letter-spacing: .6px;
}
.er {
  display: block;
  width: 818px;
  height: 577px;
  margin-top: 30px;
  background: #fff;
  border: 1px solid #ebeef3;
  border-radius: 28px;
  box-shadow: 0 2px 3px rgba(0,0,0,.08);
}
.edge {
  fill: none;
  stroke: #3d74be;
  stroke-width: 1.3;
}
.entity {
  fill: #fff;
  stroke: #3f5f88;
  stroke-width: 1.5;
}
.entity-name {
  font-size: 17.2px;
  fill: #1f416c;
  text-anchor: middle;
}
.edge-name {
  font-size: 15.5px;
  fill: #000;
  text-anchor: middle;
}
.cardinality {
  width: 383px;
  height: 568px;
  margin: 198px 0 0 59px;
  padding: 38px 0 0 39px;
  background: #eaeff6;
  border: 1px solid #dbe2eb;
  border-radius: 28px;
  font-size: 20.8px;
  line-height: 29.3px;
  color: #4b4f54;
}
.cardinality h3 {
  font-size: 29.5px;
  line-height: 39.5px;
  font-weight: 700;
  letter-spacing: .95px;
  color: #1f416c;
  margin-bottom: 29px;
}
.fact {
  display: flex;
  margin-bottom: 29px;
  white-space: nowrap;
}
.fact b {
  display: block;
  color: #000;
}
.sym {
  padding-top: 1px;
  font-size: 24.5px;
  line-height: 33.5px;
  font-weight: 800;
  color: #2a62b0;
}
.w1 { width: 62px; }
.w2 { width: 59px; }
.w3 { width: 134px; padding-top: 0; font-size: 25px; letter-spacing: .85px; }

.toolbar {
  position: absolute;
  left: 446px;
  bottom: 48px;
  width: 845px;
  height: 88px;
  display: flex;
  align-items: center;
  padding-left: 11px;
  background: #fdfdfd;
  border: 1px solid #eceef1;
  border-radius: 16px;
  box-shadow: 0 3px 8px rgba(0,0,0,.12);
}
.cursor-tool {
  width: 93px;
  height: 70px;
  display: flex;
  align-items: center;
  gap: 15px;
  padding-left: 14px;
  border-radius: 17px;
  background: #f3f4f6;
}
.cursor-tool .icon {
  width: 25px;
  height: 25px;
}
.cursor-tool .chev {
  color: #6b7280;
}
.sep {
  width: 1px;
  height: 36px;
  background: #e5e7eb;
}
.tool {
  display: flex;
  align-items: center;
  font-size: 22px;
  font-weight: 500;
  letter-spacing: .2px;
}
.tool .icon {
  width: 27px;
  height: 27px;
}
.cursor-tool + .sep { margin-left: 8px; }
.insert { width: 161px; padding-left: 29px; gap: 11px; }
.media { width: 152px; padding-left: 29px; gap: 10px; }
.shape { width: 153px; padding-left: 30px; gap: 10px; }
.theme { width: 172px; padding-left: 29px; gap: 9px; }
.note { padding-left: 29px; }

/* properties */
.props {
  position: relative;
  width: 830px;
  flex: none;
  border-left: 2px solid #f3f4f6;
  color: #4b5563;
  font-size: 20.5px;
  letter-spacing: .35px;
}
.resize-handle {
  position: absolute;
  left: -5px;
  top: 691px;
  width: 8px;
  height: 44px;
  border-radius: 4px;
  background: #f3f4f6;
}
.props-head {
  height: 79px;
  display: flex;
  align-items: center;
  justify-content: space-between;
  padding: 0 36px 0 23px;
  border-bottom: 1px solid #eff0f2;
  color: #374151;
  font-weight: 500;
  letter-spacing: .6px;
}
.props-head .icon {
  color: #0a0a0a;
}
.props-type {
  height: 88px;
  display: flex;
  align-items: center;
  gap: 18px;
  padding-left: 23px;
  border-bottom: 1px solid #eff0f2;
  font-size: 24.5px;
  font-weight: 500;
  letter-spacing: .2px;
  color: #111827;
}
.type-icon {
  width: 50px;
  height: 51px;
  display: flex;
  align-items: center;
  justify-content: center;
  border-radius: 8px;
  background: #f3f4f6;
  color: #4b5563;
}
.type-icon .icon {
  stroke-width: 1.7;
}
.sec-head {
  height: 70px;
  display: flex;
  align-items: center;
  justify-content: space-between;
  padding: 0 20px 0 24px;
  font-weight: 600;
  color: #1f2937;
}
.sec-head .icon {
  width: 36px;
  height: 36px;
  margin-top: -2px;
  stroke-width: 1.3;
  color: #666;
}
.style-sec {
  height: 165px;
  border-bottom: 1px solid #eff0f2;
}
.style-sec .sec-head {
  height: 76px;
  padding-bottom: 7px;
}
.style-select {
  width: 783px;
  height: 66px;
  margin-left: 23px;
  display: flex;
  align-items: center;
  padding: 0 16px 0 18px;
  border: 1px solid #e5e7eb;
  border-radius: 8px;
  font-weight: 500;
  letter-spacing: .5px;
  color: #374151;
}
.style-select .icon {
  width: 28px;
  height: 28px;
  margin-left: auto;
  color: #9ca3af;
}
.swatch {
  width: 43px;
  height: 44px;
  margin-right: 14px;
  padding: 16px 0 0 11px;
  border: 1px solid #e2e8f0;
  border-radius: 7px;
  background: #f6f9ff;
}
.swatch i {
  display: block;
  width: 18px;
  height: 5px;
  margin-bottom: 2px;
  border-radius: 1px;
  background: #1f416c;
}
.swatch i + i {
  width: 15px;
  height: 3px;
}
.bg-sec {
  height: 221px;
  border-bottom: 1px solid #eff0f2;
}
.field {
  display: flex;
  align-items: center;
  justify-content: space-between;
  padding: 0 23px;
  font-weight: 400;
}
.field.type {
  height: 70px;
}
.field.fill {
  height: 74px;
}
.select {
  width: 215px;
  height: 57px;
  display: flex;
  align-items: center;
  justify-content: space-between;
  padding: 0 13px 0 18px;
  border: 1px solid #eff0f2;
  border-radius: 10px;
  font-weight: 500;
  font-size: 20px;
  color: #0a0a0a;
}
.select .icon {
  color: #6b6b6b;
  stroke-width: 1.7;
}
.color-dot {
  width: 43px;
  height: 43px;
  border: 1px solid #d1d5db;
  border-radius: 50%;
  background: #f6f9ff;
}
.layers-sec {
  font-size: 19.3px;
  letter-spacing: .2px;
}
.layers-sec .sec-head {
  height: 76px;
  padding-bottom: 6px;
  font-size: 20.5px;
  letter-spacing: .35px;
}
.layer-box {
  width: 783px;
  height: 50px;
  margin-left: 23px;
  display: flex;
  align-items: center;
  padding-left: 21px;
  gap: 14px;
  border: 1px solid #f1f3f5;
  border-radius: 7px;
  background: #fbfcfc;
}
.layer-box .icon {
  stroke-width: 1.7;
  color: #9ca3af;
}
.layer-group {
  width: 783px;
  margin: 8px 0 8px 23px;
  border: 1px solid #e5e7eb;
  border-radius: 7px;
  overflow: hidden;
}
.layer {
  height: 50.4px;
  display: flex;
  align-items: center;
}
.layer.line {
  border-bottom: 1px solid #eff0f2;
}
.layer .icon {
  color: #9ca3af;
  stroke-width: 1.7;
}
.layer .icon.caret {
  width: 24px;
  height: 24px;
  color: #374151;
  stroke-width: 2;
}
.layer .folder {
  width: 27px;
  height: 27px;
  margin: 0 9px 0 13px;
}
.layer .tee {
  width: 25px;
  height: 25px;
  margin-right: 16px;
}
.group {
  font-weight: 600;
  color: #374151;
}
.layer.d0 {
  height: 51.4px;
  padding-left: 13px;
  background: #f9fafb;
}
.group.d1 { padding-left: 42px; }
.text.d1 { padding-left: 52px; }
.text.d2 { padding-left: 81px; }
.rectangle.d1 { padding-left: 46px; }
.shape-chip {
  width: 37px;
  height: 36px;
  margin-right: 10px;
  border: 1px solid #e5e7eb;
  border-radius: 4px;
  background: #eaeff6;
}
.layer-box.next {
  border-color: #e5e7eb;
  background: #f9fafb;
}

/* right rail */
.rail {
  flex: 1;
  display: flex;
  flex-direction: column;
  align-items: center;
  gap: 15px;
  padding: 22px 0 28px 4px;
  border-left: 1px solid #eff0f2;
  color: #4b5563;
}
.rail-btn {
  width: 65px;
  height: 64px;
  display: flex;
  align-items: center;
  justify-content: center;
  border: 1px solid transparent;
  border-radius: 11px;
}
.rail-btn.on {
  color: #2d5bec;
  background: #f0f6ff;
  border-color: #bfdbfe;
}
.rail-bottom {
  margin-top: auto;
  display: flex;
  flex-direction: column;
  align-items: center;
  gap: 42px;
  font-size: 20px;
  font-weight: 500;
  letter-spacing: .4px;
}
.rail-bottom .icon {
  width: 30px;
  height: 30px;
}
```
